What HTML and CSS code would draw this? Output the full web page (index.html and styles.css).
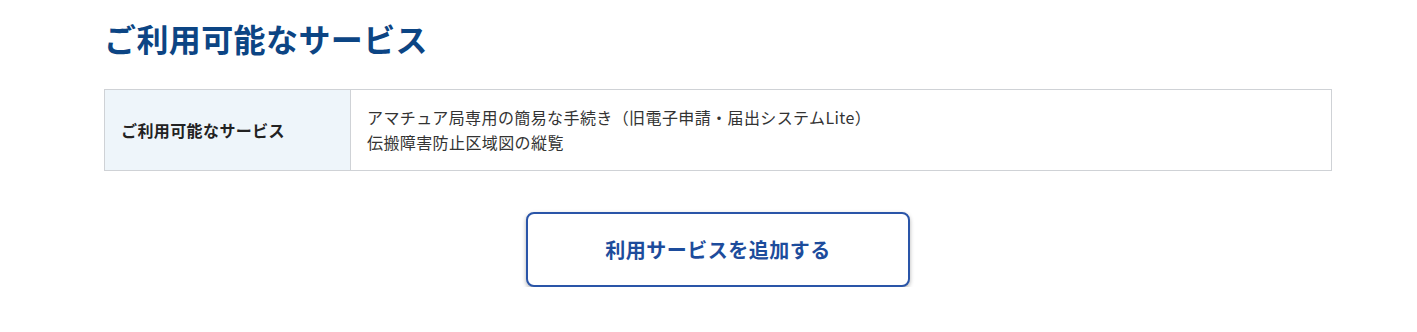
FILE: index.html
```html
<!DOCTYPE html>
<html lang="ja">
<head>
<meta charset="utf-8">
<link rel="stylesheet" href="styles.css">
</head>
<body>
<div class="container">
  <h2 class="title">ご利用可能なサービス</h2>
  <table class="info">
    <tr>
      <th>ご利用可能なサービス</th>
      <td>アマチュア局専用の簡易な手続き（旧電子申請・届出システムLite）<br>伝搬障害防止区域図の縦覧</td>
    </tr>
  </table>
  <div class="actions">
    <button class="add-btn" type="button">利用サービスを追加する</button>
  </div>
</div>
</body>
</html>
```
FILE: styles.css
```css
html, body {
  margin: 0;
  padding: 0;
  background: #ffffff;
}
body {
  font-family: "Noto Sans CJK JP", "Noto Sans", sans-serif;
  color: #333333;
  letter-spacing: 0.025em;
}
.container {
  width: 1228px;
  margin-left: 104px;
}
.title {
  margin: 14px 0 27px 0;
  font-size: 32px;
  line-height: 48px;
  font-weight: 700;
  color: #0c4584;
}
.info {
  width: 100%;
  border-collapse: collapse;
  border: 1px solid #cfd2d6;
}
.info th,
.info td {
  border: 1px solid #cfd2d6;
  font-size: 16px;
  line-height: 25px;
  padding: 15px 16px;
  text-align: left;
  vertical-align: middle;
}
.info th {
  width: 213px;
  background: #eef5fa;
  font-weight: 700;
  color: #222222;
}
.info td {
  color: #333333;
  font-weight: 400;
}
.actions {
  display: flex;
  justify-content: center;
  margin-top: 41px;
}
.add-btn {
  width: 384px;
  height: 75px;
  background: #ffffff;
  border: 2px solid #2a55a8;
  border-radius: 8px;
  box-shadow: 0 2px 4px rgba(0, 0, 0, 0.3);
  font-family: "Noto Sans CJK JP", "Noto Sans", sans-serif;
  font-size: 20px;
  font-weight: 700;
  letter-spacing: 0.025em;
  color: #1d4c9c;
  cursor: pointer;
}
```
